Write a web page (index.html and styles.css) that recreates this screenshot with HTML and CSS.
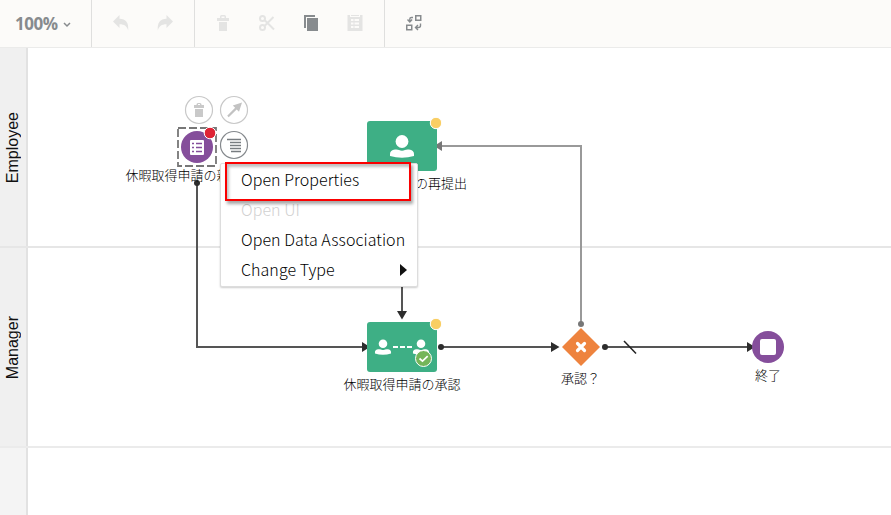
FILE: index.html
```html
<!DOCTYPE html>
<html lang="ja">
<head>
<meta charset="utf-8">
<title>Process Editor</title>
<link rel="stylesheet" href="styles.css">
</head>
<body>
<header class="toolbar">
  <div class="group zoom-group"><span class="zoom">100%</span>
    <svg class="chevron" width="8" height="6" viewBox="0 0 8 6"><path d="M1 1l3 3 3-3" fill="none" stroke="#878b8e" stroke-width="1.5"/></svg>
  </div>
  <div class="group history">
    <svg class="off" width="16" height="16" viewBox="0 0 16 16"><path d="M0 6.500L6.500 0v3.700C13 3.800 15.800 7.500 15.200 15.500 14 11.200 11.500 9.200 6.500 9.200V13z"/></svg>
    <svg class="off" width="16" height="16" viewBox="0 0 16 16"><path d="M16 6.500L9.500 0v3.700C3 3.800.2 7.500.8 15.500 2 11.200 4.500 9.200 9.500 9.200V13z"/></svg>
  </div>
  <div class="group edit">
    <svg class="off" width="16" height="16" viewBox="0 0 16 16"><path d="M2 3h3V1.500Q5 0 6.500 0h3Q11 0 11 1.500V3h3v3H2zM6.500 1.500V3h3V1.500zM4 7h8v9H4z" fill-rule="evenodd"/></svg>
    <svg class="off line" width="16" height="16" viewBox="0 0 16 16"><circle cx="3.500" cy="3.500" r="2.500"/><circle cx="3.500" cy="12.500" r="2.500"/><path d="M5.500 5L15 14.500M5.500 11L14.500 2"/></svg>
    <svg class="on" width="16" height="16" viewBox="0 0 16 16"><path d="M1 0h11v2H3v11H1zM4 3h11v13H4z"/></svg>
    <svg class="off" width="16" height="16" viewBox="0 0 16 16"><path fill-rule="evenodd" d="M.5 0H3v2h10V0h2.500v16H.5zM4 4v2h2.500V4zM7.500 4v2H12V4zM4 7.500v2h2.500v-2zM7.500 7.500v2H12v-2zM4 11v2h2.500v-2zM7.500 11v2H12v-2z"/><path d="M4 0h8v1H4z"/></svg>
  </div>
  <div class="group layout">
    <svg class="on" width="16" height="16" viewBox="0 0 16 16"><path fill-rule="evenodd" d="M9 0h6.500v6H9zM10.500 1.500v3H14v-3zM0 9.500h6.500v6H0zM1.500 11v3H5v-3z"/><path d="M7 2.500H5.500Q3.800 2.500 3.800 4v2M1.500 4.500L3.800 7l2.300-2.500M14.500 8.500v2q0 2-2 2H10M12 10l-2.500 2.500L12 15" fill="none" stroke="#878b8e" stroke-width="1.400"/></svg>
  </div>
</header>
<main class="canvas">
  <section class="lane first"><h2 class="lane-head"><span>Employee</span></h2></section>
  <section class="lane second"><h2 class="lane-head"><span>Manager</span></h2></section>
  <section class="lane last"><h2 class="lane-head"></h2></section>
  <svg class="diagram" width="891" height="515" viewBox="0 0 891 515">
    <defs>
      <g id="person"><circle cx="0" cy="-5.500" r="6.400"/><path d="M-12 9V7Q-12 3-7 2.500-4 2.300-3 3 0 4.500 3 3 4 2.300 7 2.500 12 3 12 7v2Q6 10.800 0 10.800T-12 9z"/></g>
    </defs>
    <g class="edge">
      <path d="M197 183V347H364M402 200V314M441 347H554M605 347H750"/>
      <path class="muted" d="M581 324V146H440"/>
      <path class="slash" d="M624 341L636 353.500"/>
    </g>
    <g class="tips">
      <path d="M362 342l8 5-8 5zM397 311h10l-5 8.500zM551 342l8.500 5-8.500 5zM747 342l8 5-8 5z"/>
      <circle cx="197" cy="183" r="3"/><circle cx="441" cy="347" r="3"/><circle cx="605" cy="347" r="3"/>
      <path class="muted" d="M442 141v10l-8-5z"/><circle class="muted" cx="581" cy="324" r="3"/>
    </g>

    <rect x="178" y="128" width="38" height="38" fill="none" stroke="#777" stroke-width="1.800" stroke-dasharray="8 3"/>
    <circle cx="197" cy="147" r="16" fill="#854e9b"/>
    <rect x="190" y="140" width="14" height="15" rx="1" fill="#fff"/>
    <path d="M192 143.500h2M192 147.500h2M192 151.500h2M196 143.500h6M196 147.500h6M196 151.500h6" stroke="#854e9b" stroke-width="1.300"/>
    <circle cx="210" cy="133" r="5.800" fill="#df2435" stroke="#fff"/>

    <g fill="#fff" stroke="#c8c8c8" stroke-width="1.200">
      <circle cx="199" cy="110" r="13.500"/><circle cx="234" cy="110" r="13.500"/><circle cx="234" cy="145" r="13.500" stroke="#85898d"/>
    </g>
    <path fill="#c9c9c9" fill-rule="evenodd" d="M194 105h2.500v-.5q0-1.500 1.500-1.500h2q1.500 0 1.500 1.500v.5h2.500v3h-10zM198 104v1h2v-1zM195 109h8v8h-8z"/>
    <path fill="#c2c2c2" d="M242 102.500l-3 9.200-2.300-2.300-8 7.800-1.500-1.500 7.900-7.900-2.300-2.300z"/>
    <path d="M227 139.500h14M230 142.500h11M230 145.500h11M230 148.500h11M231 151.500h10" stroke="#777c80" stroke-width="1.300"/>

    <rect x="367" y="121" width="70" height="50" rx="3" fill="#3eaf85"/>
    <use href="#person" x="402" y="147" fill="#fff"/>
    <circle cx="436" cy="123" r="5.700" fill="#f9ce63" stroke="#fff"/>

    <rect x="367" y="322" width="70" height="50" rx="3" fill="#3eaf85"/>
    <g fill="#fff"><use href="#person" transform="translate(383 347.500) scale(.67)"/><use href="#person" transform="translate(421 347.500) scale(.67)"/></g>
    <path d="M393 347h19" stroke="#fff" stroke-width="2" stroke-dasharray="5 2"/>
    <circle cx="423.500" cy="358.500" r="8" fill="#74b559" stroke="#fff"/>
    <path d="M419.500 358.500l3 2.700 5.200-5" fill="none" stroke="#fff" stroke-width="1.700"/>
    <circle cx="436" cy="324" r="5.700" fill="#f9ce63" stroke="#fff"/>

    <path d="M581 328l19 19-19 19-19-19z" fill="#ee833e"/>
    <path d="M577.500 343.500l7 7M584.500 343.500l-7 7" stroke="#fff" stroke-width="3.200" stroke-linecap="round"/>
    <circle cx="768" cy="347" r="16" fill="#854e9b"/><rect x="760" y="339" width="16" height="16" rx="2" fill="#fff"/>

    <g class="labels">
      <text x="125.500" y="180">休暇取得申請の新</text>
      <text x="415" y="188">の再提出</text>
      <text x="343.500" y="389">休暇取得申請の承認</text>
      <text x="561" y="383">承認？</text>
      <text x="755" y="380">終了</text>
    </g>
  </svg>
  <nav class="menu">
    <div class="item">Open Properties</div>
    <div class="item disabled">Open UI</div>
    <div class="item">Open Data Association</div>
    <div class="item">Change Type<svg width="7" height="12" viewBox="0 0 7 12"><path d="M0 0l7 6-7 6z" fill="#111"/></svg></div>
  </nav>
  <div class="highlight"></div>
</main>
</body>
</html>
```

FILE: styles.css
```css
* { box-sizing: border-box; }
body {
  margin: 0;
  height: 515px;
  overflow: hidden;
  position: relative;
  display: flex;
  flex-direction: column;
  background: #fff;
  font-family: "Noto Sans CJK JP", "Noto Sans", sans-serif;
}
.toolbar {
  flex: none;
  display: flex;
  height: 48px;
  background: #fcfbf9;
  border-bottom: 1px solid #ebebea;
}
.group {
  display: flex;
  align-items: center;
  padding-bottom: 1px;
  border-right: 1px solid #dfdfde;
}
.group svg { flex: none; }
.group .chevron { margin-top: 3px; }
.zoom-group { width: 92px; padding-left: 15px; gap: 5px; }
.zoom { font: bold 17px "Open Sans", sans-serif; color: #878b8e; width: 43px; letter-spacing: -.5px; }
.history { width: 103px; padding-left: 21px; gap: 28px; }
.edit { width: 190px; padding-left: 20px; gap: 28px; }
.layout { border: 0; padding-left: 21px; }
.off { fill: #e4e4e3; }
.on { fill: #878b8e; }
.line { fill: none; stroke: #e4e4e3; stroke-width: 2; }

.canvas { flex: 1; min-height: 0; display: flex; flex-direction: column; }
.lane { flex: none; height: 200px; display: flex; border-bottom: 2px solid #e6e6e6; }
.second { border-bottom-color: #ebebeb; }
.lane.last { flex: 1; min-height: 0; height: auto; border: 0; }
.lane-head {
  margin: 0;
  width: 28px;
  padding-top: 2px;
  display: flex;
  align-items: center;
  justify-content: center;
  background: #f0f0f0;
  border-right: 2px solid #e2e2e2;
  font: 16px/20px "Liberation Sans", sans-serif;
  color: #111;
}
.last .lane-head { background: #f4f4f4; }
.lane-head span { writing-mode: vertical-rl; transform: rotate(180deg); }

.diagram { position: absolute; left: 0; top: 0; }
.edge path { fill: none; stroke: #555; stroke-width: 2; }
.edge .muted { stroke: #999; }
.edge .slash { stroke: #222; stroke-width: 1.500; }
.tips { fill: #2d2d2d; }
.tips .muted { fill: #777; }
.labels { font-size: 13px; font-weight: 300; fill: #000; }

.menu {
  position: absolute;
  left: 220px;
  top: 163px;
  width: 198px;
  height: 124px;
  background: #fff;
  border: 1px solid #ddd;
  border-radius: 2px;
  box-shadow: 0 1px 2px rgba(0, 0, 0, .2);
}
.item {
  display: flex;
  align-items: center;
  justify-content: space-between;
  height: 30px;
  padding: 0 10px 0 20px;
  font-size: 16px;
  font-weight: 300;
  letter-spacing: .06px;
  line-height: 30px;
  white-space: nowrap;
  color: #000;
}
.item svg { position: relative; top: 1px; }
.disabled { color: #d0d0d0; }
.highlight {
  position: absolute;
  left: 225px;
  top: 162px;
  width: 186px;
  height: 39px;
  border: 2px solid #fa0000;
  box-shadow: 2px 3px 3px rgba(0, 0, 0, .35), inset 2px 3px 3px rgba(0, 0, 0, .25);
}
```
